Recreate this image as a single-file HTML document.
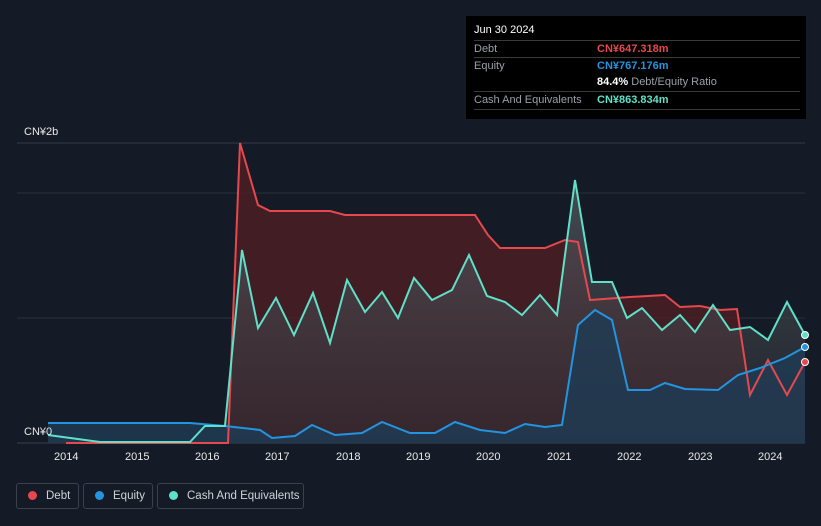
<!DOCTYPE html>
<html><head><meta charset="utf-8"><style>
html,body{margin:0;width:821px;height:526px;overflow:hidden}
body{background:#151b26;font-family:"Liberation Sans","Noto Sans CJK SC",sans-serif;position:relative}
.tt{position:absolute;left:466px;top:16px;width:340px;height:103px;background:#000;}
.tt .h{position:absolute;left:8px;top:8px;color:#fff;font-size:11px}
.row{position:absolute;left:8px;width:326px;border-top:1px solid #3a3a3a;font-size:11px;color:#9aa0a6;height:17px;line-height:17px}
.row span{position:absolute;left:123px;font-weight:bold}
.lg{position:absolute;top:483px;height:26px;border:1px solid #3a404c;border-radius:3px;color:#cfd3d8;font-size:11.5px;line-height:24px;box-sizing:border-box;white-space:nowrap;overflow:hidden}
.dot{display:inline-block;width:9px;height:9px;border-radius:50%;margin:0 9px 0 11px;vertical-align:-1px}
.yr{position:absolute;top:451px;color:#e8e8e8;font-size:11px}
</style></head><body>
<svg width="821" height="526" style="position:absolute;left:0;top:0">
<defs>
<linearGradient id="gc" x1="0" y1="0" x2="0" y2="1"><stop offset="0" stop-color="#5a5f66" stop-opacity=".7"/><stop offset="1" stop-color="#2a2e35" stop-opacity=".5"/></linearGradient>
</defs>
<line x1="17" y1="143" x2="805" y2="143" stroke="#353b46"/>
<line x1="17" y1="193" x2="805" y2="193" stroke="#2a303a"/>
<line x1="17" y1="318" x2="805" y2="318" stroke="#2a303a"/>
<line x1="17" y1="443" x2="805" y2="443" stroke="#3a404c"/>
<polygon fill="#4a1f24" opacity=".85" points="228,443 240,143 258,205 270,211 330,211 345,215 475,215 488,235 500,248 545,248 565,240 578,242 590,300 630,297 665,295 680,307 700,306 720,310 737,309 750,395 768,360 787,395 805,362 805,443"/>
<polygon fill="url(#gc)" points="48,435 100,442 190,442 205,426 225,426 242,250 258,328 276,298 294,335 313,293 330,343 347,280 365,312 382,292 398,318 414,278 432,300 452,290 469,255 487,296 505,302 522,315 540,295 557,315 575,180 592,282 612,282 627,318 642,308 662,330 680,315 695,332 713,305 730,330 750,327 768,340 787,302 805,335 805,443 48,443"/>
<polygon fill="#1e3c55" opacity=".8" points="48,423 190,423 225,426 260,430 272,438 295,436 312,425 335,435 362,433 382,422 410,433 435,433 455,422 480,430 505,433 525,424 545,427 562,425 578,325 595,310 612,320 628,390 650,390 665,383 685,389 718,390 738,375 760,368 785,358 805,347 805,443 48,443"/>
<polyline fill="none" stroke="#e5484d" stroke-width="2" points="66,443 228,443 240,143 258,205 270,211 330,211 345,215 475,215 488,235 500,248 545,248 565,240 578,242 590,300 630,297 665,295 680,307 700,306 720,310 737,309 750,395 768,360 787,395 805,362"/>
<polyline fill="none" stroke="#2394df" stroke-width="2" points="48,423 190,423 225,426 260,430 272,438 295,436 312,425 335,435 362,433 382,422 410,433 435,433 455,422 480,430 505,433 525,424 545,427 562,425 578,325 595,310 612,320 628,390 650,390 665,383 685,389 718,390 738,375 760,368 785,358 805,347"/>
<polyline fill="none" stroke="#5fe0c8" stroke-width="2" points="48,435 100,442 190,442 205,426 225,426 242,250 258,328 276,298 294,335 313,293 330,343 347,280 365,312 382,292 398,318 414,278 432,300 452,290 469,255 487,296 505,302 522,315 540,295 557,315 575,180 592,282 612,282 627,318 642,308 662,330 680,315 695,332 713,305 730,330 750,327 768,340 787,302 805,335"/>
<circle cx="805" cy="362" r="3.5" fill="#e5484d" stroke="#fff" stroke-width="1"/>
<circle cx="805" cy="347" r="3.5" fill="#2394df" stroke="#fff" stroke-width="1"/>
<circle cx="805" cy="335" r="3.5" fill="#5fe0c8" stroke="#fff" stroke-width="1"/>
<text x="24" y="135" fill="#e8e8e8" font-size="11" font-family="Liberation Sans">CN¥2b</text>
<text x="24" y="435" fill="#e8e8e8" font-size="11" font-family="Liberation Sans">CN¥0</text>
</svg>
<div class="yr" style="left:54px">2014</div><div class="yr" style="left:125px">2015</div><div class="yr" style="left:195px">2016</div><div class="yr" style="left:265px">2017</div><div class="yr" style="left:336px">2018</div><div class="yr" style="left:406px">2019</div><div class="yr" style="left:476px">2020</div><div class="yr" style="left:547px">2021</div><div class="yr" style="left:617px">2022</div><div class="yr" style="left:688px">2023</div><div class="yr" style="left:758px">2024</div>
<div class="tt"><div class="h">Jun 30 2024</div>
<div class="row" style="top:24px">Debt<span style="color:#e5484d">CN¥647.318m</span></div>
<div class="row" style="top:41px">Equity<span style="color:#2394df">CN¥767.176m</span></div>
<div class="row" style="top:58px;border-top:none"><span style="color:#fff">84.4% <b style="color:#9aa0a6;font-weight:normal">Debt/Equity Ratio</b></span></div>
<div class="row" style="top:75px">Cash And Equivalents<span style="color:#5fe0c8">CN¥863.834m</span></div>
<div class="row" style="top:93px;height:0"></div>
</div>
<div class="lg" style="left:16px;width:63px"><span class="dot" style="background:#e5484d"></span>Debt</div>
<div class="lg" style="left:83px;width:70px"><span class="dot" style="background:#2394df"></span>Equity</div>
<div class="lg" style="left:157px;width:147px"><span class="dot" style="background:#5fe0c8"></span>Cash And Equivalents</div>
</body></html>
